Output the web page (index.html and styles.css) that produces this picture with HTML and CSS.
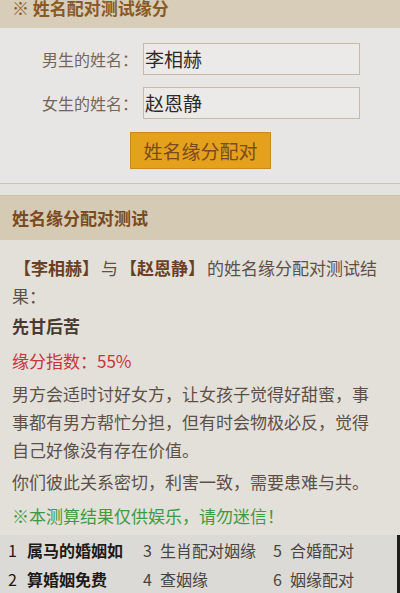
FILE: index.html
```html
<!DOCTYPE html>
<html lang="zh-CN">
<head>
<meta charset="utf-8">
<link rel="stylesheet" href="styles.css">
</head>
<body>
<div class="page">
  <div class="top-head">※ 姓名配对测试缘分</div>
  <div class="form">
    <div class="row"><span class="label">男生的姓名：</span><div class="input">李相赫</div></div>
    <div class="row"><span class="label">女生的姓名：</span><div class="input">赵恩静</div></div>
    <div class="btn-row"><div class="btn">姓名缘分配对</div></div>
  </div>
  <div class="gap"></div>
  <div class="head2">姓名缘分配对测试</div>
  <div class="content">
    <p class="intro"><b>【李相赫】</b>与<b>【赵恩静】</b>的姓名缘分配对测试结果：</p>
    <p class="title">先甘后苦</p>
    <p class="score">缘分指数：55%</p>
    <p class="desc">男方会适时讨好女方，让女孩子觉得好甜蜜，事事都有男方帮忙分担，但有时会物极必反，觉得自己好像没有存在价值。</p>
    <p class="desc2">你们彼此关系密切，利害一致，需要患难与共。</p>
    <p class="note">※本测算结果仅供娱乐，请勿迷信！</p>
  </div>
  <div class="links">
    <div class="link strong"><span class="num">1</span>属马的婚姻如</div>
    <div class="link"><span class="num">3</span>生肖配对姻缘</div>
    <div class="link"><span class="num">5</span>合婚配对</div>
    <div class="link strong"><span class="num">2</span>算婚姻免费</div>
    <div class="link"><span class="num">4</span>查姻缘</div>
    <div class="link"><span class="num">6</span>姻缘配对</div>
  </div>
</div>
</body>
</html>
```
FILE: styles.css
```css
html, body {
  margin: 0;
  padding: 0;
  background: #e3e0da;
}
body {
  font-family: "Noto Sans CJK SC", "Noto Sans", sans-serif;
  width: 400px;
  height: 593px;
  overflow: hidden;
}
.page {
  display: flex;
  flex-direction: column;
  height: 593px;
}
.top-head {
  height: 28px;
  line-height: 16px;
  background: #d7cdb8;
  color: #8a5a25;
  font-weight: bold;
  font-size: 17px;
  padding-left: 12px;
  box-sizing: border-box;
  flex: none;
}
.form {
  background: #e7e6e4;
  border-bottom: 1px solid #cbc3b4;
  padding: 15px 0 14px 42px;
  display: flex;
  flex-direction: column;
  gap: 12px;
  flex: none;
}
.row {
  display: flex;
  align-items: center;
}
.label {
  font-size: 16px;
  color: #75655a;
  width: 101px;
}
.input {
  width: 214px;
  height: 30px;
  border: 1px solid #c9b9a2;
  background: #ebeae8;
  font-size: 19px;
  line-height: 30px;
  color: #2f2a26;
  padding-left: 1px;
}
.btn-row {
  display: flex;
  padding-left: 88px;
  margin-top: 1px;
}
.btn {
  width: 139px;
  height: 35px;
  background: #e4a11c;
  border: 1px solid #c88a20;
  color: #7a4a20;
  font-size: 19px;
  line-height: 35px;
  text-align: center;
}
.gap {
  height: 11px;
  background: #e5e3e0;
  border-bottom: 1px solid #c9c0ae;
  flex: none;
}
.head2 {
  height: 44px;
  background: #d5cbb4;
  color: #7a4a22;
  font-weight: bold;
  font-size: 17px;
  line-height: 44px;
  padding-left: 12px;
  flex: none;
}
.content {
  flex: 1;
  padding: 14px 16px 0 12px;
  color: #5e5048;
  font-size: 17px;
  line-height: 28px;
}
.content p {
  margin: 0;
}
.content b {
  color: #6a3f22;
  display: inline-block;
  margin: 0 2px;
}
.content .title {
  font-weight: bold;
  color: #4a3a30;
  margin-top: 2px;
}
.content .score {
  color: #c8343c;
  margin-top: 7px;
}
.content .desc {
  margin-top: 5px;
}
.content .desc2 {
  margin-top: 4px;
}
.content .note {
  color: #3e9a40;
  margin-top: 6px;
}
.links {
  flex: none;
  display: grid;
  grid-template-columns: 135px 130px 1fr;
  background: #dcdad7;
  border-right: 3px solid #1e1e1e;
  padding: 1px 0 0 8px;
  height: 58px;
  box-sizing: border-box;
}
.link {
  font-size: 16px;
  line-height: 28px;
  color: #4a4440;
  white-space: nowrap;
}
.link.strong {
  color: #1e1a18;
  font-weight: bold;
}
.num {
  font-weight: normal;
  display: inline-block;
  width: 17px;
}
.link.strong .num {
  width: 19px;
}
```
